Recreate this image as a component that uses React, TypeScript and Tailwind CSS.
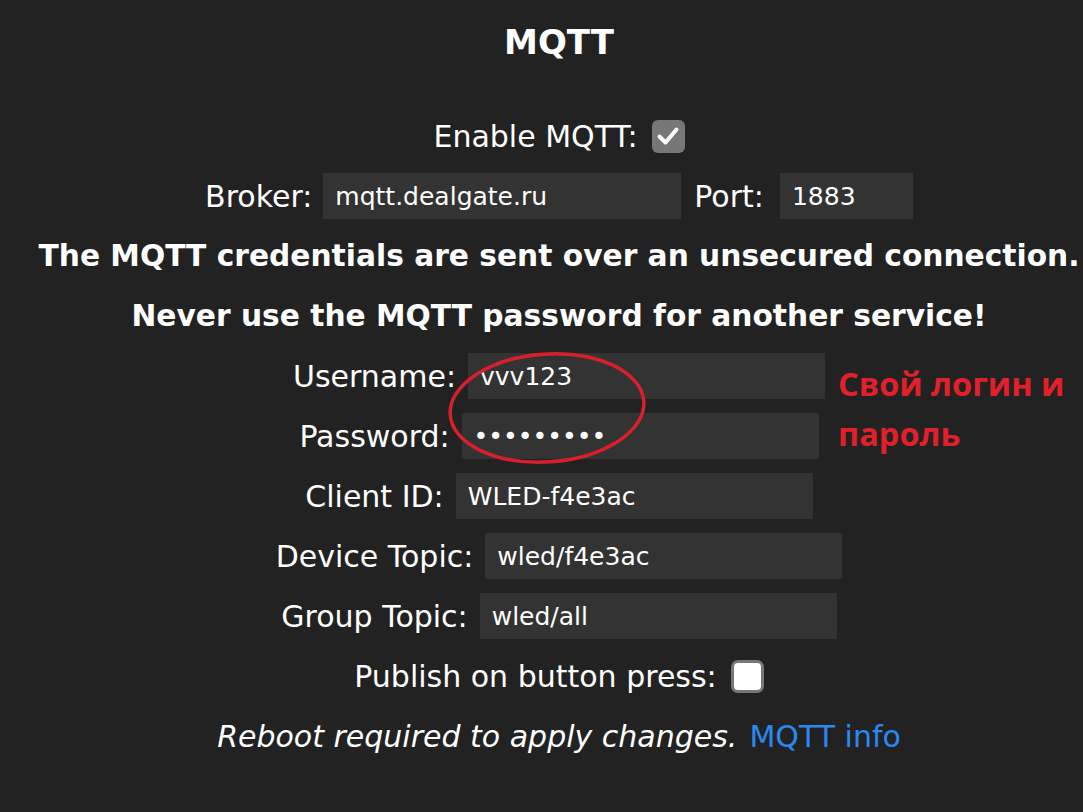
import React from "react";

const font = { fontFamily: '"DejaVu Sans", Verdana, sans-serif' };

function Field({ label, value, type = "text", width = "w-[357px]" }: { label: string; value: string; type?: string; width?: string }) {
  return (
    <div className="flex h-[60px] items-center justify-center gap-[12px]">
      <span>{label}</span>
      <input
        type={type}
        readOnly
        value={value}
        className={`${width} h-[46px] bg-[#333] pl-[12px] text-[25px] text-white outline-none`}
        style={font}
      />
    </div>
  );
}

export default function App() {
  return (
    <div className="w-[1083px] h-[812px] overflow-hidden bg-[#222]">
      <div className="relative w-[1118px] text-white text-[30px]" style={font}>
        <div className="flex h-[84px] items-center justify-center text-[34px] font-bold">MQTT</div>
        <div className="h-[22px]" />
        <div className="flex h-[60px] items-center justify-center gap-[14px]">
          <span>Enable MQTT:</span>
          <div className="flex h-[33px] w-[33px] items-center justify-center rounded-[6px] bg-[#777]">
            <svg width="24" height="24" viewBox="0 0 24 24">
              <path d="M3.5 12.5 L9.5 18.5 L20.5 5.5" fill="none" stroke="#fff" strokeWidth="4" strokeLinecap="round" strokeLinejoin="round" />
            </svg>
          </div>
        </div>
        <div className="flex h-[60px] items-center justify-center">
          <span>Broker:</span>
          <input readOnly value="mqtt.dealgate.ru" className="ml-[11px] w-[358px] h-[46px] bg-[#333] pl-[12px] text-[25px] text-white outline-none" style={font} />
          <span className="ml-[13px]">Port:</span>
          <input readOnly value="1883" className="ml-[16px] w-[133px] h-[46px] bg-[#333] pl-[12px] text-[25px] text-white outline-none" style={font} />
        </div>
        <div className="flex h-[60px] items-center justify-center font-bold text-[29.7px] whitespace-nowrap">
          The MQTT credentials are sent over an unsecured connection.
        </div>
        <div className="flex h-[60px] items-center justify-center font-bold text-[29.7px] whitespace-nowrap">
          Never use the MQTT password for another service!
        </div>
        <Field label="Username:" value="vvv123" />
        <Field label="Password:" value="•••••••••" />
        <Field label="Client ID:" value="WLED-f4e3ac" />
        <Field label="Device Topic:" value="wled/f4e3ac" />
        <Field label="Group Topic:" value="wled/all" />
        <div className="flex h-[60px] items-center justify-center gap-[14px]">
          <span>Publish on button press:</span>
          <div className="h-[33px] w-[33px] rounded-[7px] border-[3px] border-[#777] bg-white" />
        </div>
        <div className="flex h-[60px] items-center justify-center whitespace-nowrap">
          <span className="italic">Reboot required to apply changes.</span>
          <span className="ml-[12px] text-[#2a88f2]">MQTT info</span>
        </div>

        <svg className="absolute left-[440px] top-[346px]" width="215" height="125" viewBox="0 0 215 125">
          <ellipse cx="107" cy="62" rx="97" ry="54" fill="none" stroke="#d8202c" strokeWidth="3.5" transform="rotate(-4 107 62)" />
        </svg>
        <div
          className="absolute left-[838px] top-[359px] text-[32.5px] font-bold leading-[50px] text-[#e0202a]"
          style={{ fontFamily: '"Open Sans", "Liberation Sans", sans-serif' }}
        >
          Свой логин и<br />пароль
        </div>
      </div>
    </div>
  );
}
